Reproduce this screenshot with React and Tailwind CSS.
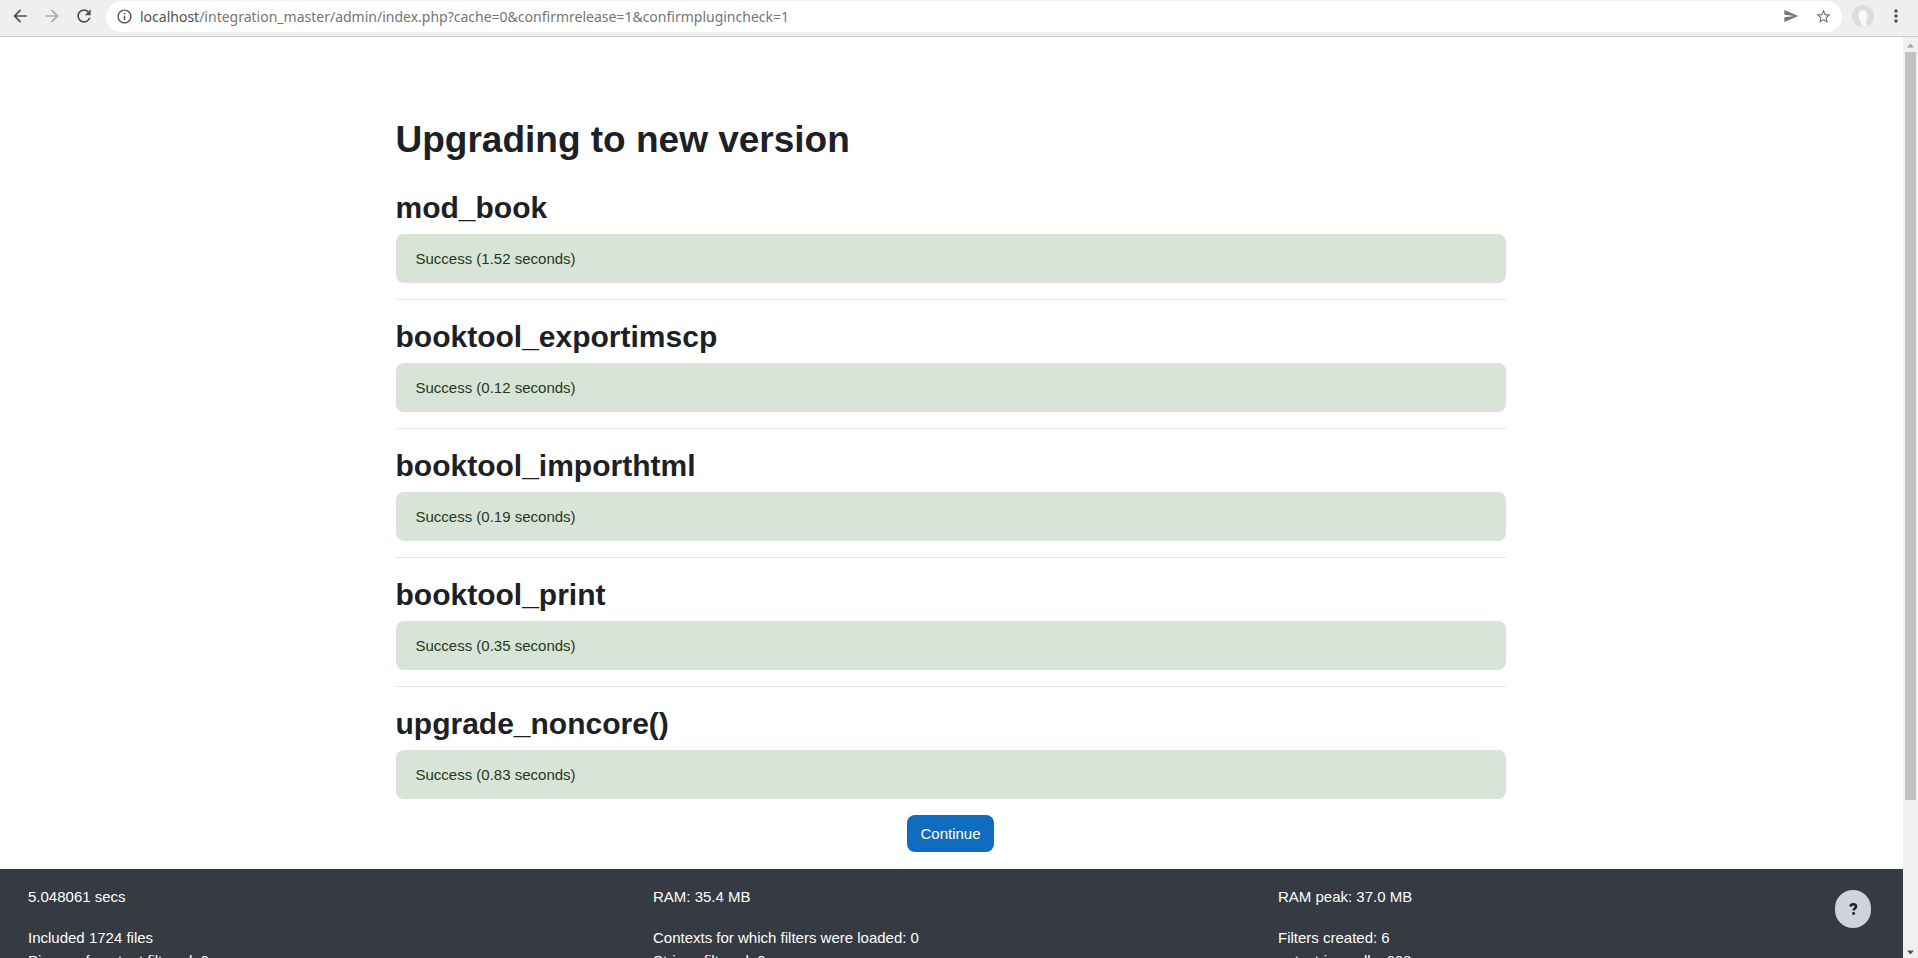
import React from "react";
import { MdArrowBack, MdArrowForward, MdRefresh, MdSend, MdStarBorder, MdMoreVert, MdInfoOutline } from "react-icons/md";

const steps = [
  { name: "mod_book", seconds: "1.52" },
  { name: "booktool_exportimscp", seconds: "0.12" },
  { name: "booktool_importhtml", seconds: "0.19" },
  { name: "booktool_print", seconds: "0.35" },
  { name: "upgrade_noncore()", seconds: "0.83" },
];

const performance = [
  ["5.048061 secs", "Included 1724 files", "Pieces of content filtered: 0"],
  ["RAM: 35.4 MB", "Contexts for which filters were loaded: 0", "Strings filtered: 0"],
  ["RAM peak: 37.0 MB", "Filters created: 6", "get_string calls: 608"],
];

const BrowserBar = () => {
  return (
    <header className="flex h-[37px] shrink-0 items-center border-b border-[#cacaca] bg-[#efefef] pl-2.5 pr-3 pb-1 text-[#505050]">
      <nav className="flex gap-3">
        <button aria-label="Back">
          <MdArrowBack size={20} />
        </button>
        <button aria-label="Forward" className="text-[#ababab]">
          <MdArrowForward size={20} />
        </button>
        <button aria-label="Reload">
          <MdRefresh size={20} />
        </button>
      </nav>
      <div className="ml-3 flex h-[31px] flex-1 items-center rounded-full bg-white px-2.5 font-['Noto_Sans',sans-serif] text-[14px]">
        <MdInfoOutline size={17} className="mr-[7px]" />
        <label htmlFor="address">localhost</label>
        <input
          id="address"
          className="min-w-0 flex-1 text-[#757575] outline-none"
          defaultValue="/integration_master/admin/index.php?cache=0&confirmrelease=1&confirmplugincheck=1"
        />
        <button aria-label="Send" className="mr-4 text-[#757575]">
          <MdSend size={16} />
        </button>
        <button aria-label="Bookmark" className="text-[#757575]">
          <MdStarBorder size={17} />
        </button>
      </div>
      <button aria-label="Profile" className="ml-2.5">
        <svg width="22" height="22" viewBox="0 0 22 22">
          <circle cx="11" cy="11" r="11" fill="#dcdcdc" />
          <path d="M11 5c3 0 4.500 2 4.500 5.500 0 2.500-.5 4-1.500 5.500l1 5.300-4 .7-1-3-1.500 1.500.5-3.500C7.500 16 6.500 13.500 6.500 10.500 6.500 7 8 5 11 5z" fill="#f7f9fb" />
        </svg>
      </button>
      <button aria-label="Menu" className="ml-3">
        <MdMoreVert size={20} />
      </button>
    </header>
  );
};

const ScrollBar = () => {
  return (
    <div className="flex w-[15px] shrink-0 flex-col items-center bg-[#f0f0f0]">
      <svg className="shrink-0" width="15" height="15" viewBox="0 0 15 15">
        <path d="M4 10.500L7.500 6.500 11 10.500z" fill="#a0a0a0" />
      </svg>
      <div className="w-full flex-1 px-0.5">
        <div className="h-[84%] bg-[#c1c1c1]" />
      </div>
      <svg className="shrink-0" width="15" height="15" viewBox="0 0 15 15">
        <path d="M4 7.500L7.500 11.500 11 7.500z" fill="#505050" />
      </svg>
    </div>
  );
};

const App = () => {
  return (
    <div className="flex h-screen flex-col overflow-hidden bg-white font-['Liberation_Sans',Arial,sans-serif] text-[15px] leading-[23px] text-[#1d2125]">
      <BrowserBar />
      <div className="flex min-h-0 flex-1">
        <div className="relative flex-1 overflow-hidden">
          <main className="mx-auto max-w-[1112px] pt-20 pr-0.5 pb-[17px]">
            <h1 className="text-[37px] leading-[46px] font-bold">Upgrading to new version</h1>
            <div className="mt-[27px]">
              {steps.map((item, index) => (
                <section key={index}>
                  {index > 0 && <hr className="mt-4 mb-[19px] border-[#e6e6e6]" />}
                  <h2 className="text-[30px] leading-9 font-bold">{item.name}</h2>
                  <p className="mt-2 rounded-lg bg-[#d8e4d7] px-5 py-[13px] text-[#1c3b19]">
                    Success ({item.seconds} seconds)
                  </p>
                </section>
              ))}
            </div>
            <div className="mt-4 flex justify-center">
              <button className="rounded-lg bg-[#0f6cbf] px-[13px] py-[7px] text-white">Continue</button>
            </div>
          </main>
          <footer className="grid grid-cols-3 bg-[#363a42] py-4 pl-7 text-white">
            {performance.map((column, index) => (
              <div key={index}>
                <p className="mb-[18px]">{column[0]}</p>
                <p>{column[1]}</p>
                <p>{column[2]}</p>
              </div>
            ))}
          </footer>
          <button
            aria-label="Help"
            className="absolute right-8 bottom-[30px] flex h-[38px] w-9 items-center justify-center rounded-full bg-[#ced4da]"
          >
            <svg width="9" height="12" viewBox="0 0 10 14" fill="none" stroke="#1d2125">
              <path d="M1.500 4C1.800 2.200 3 1.500 4.800 1.500 6.800 1.500 8 2.500 8 4.100 8 6.300 5.200 6.200 5.200 8.800" strokeWidth="3" />
              <circle cx="5.100" cy="12.200" r="1.700" fill="#1d2125" stroke="none" />
            </svg>
          </button>
        </div>
        <ScrollBar />
      </div>
    </div>
  );
};

export default App;
